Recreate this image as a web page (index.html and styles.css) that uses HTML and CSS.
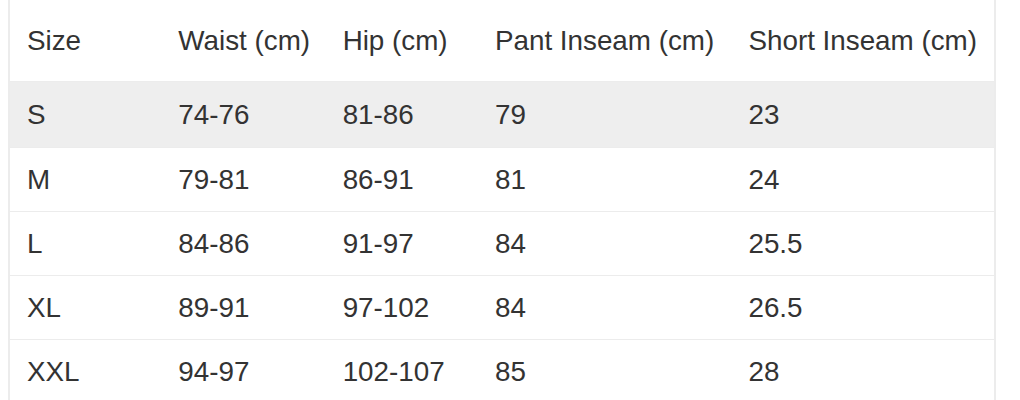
FILE: index.html
```html
<!DOCTYPE html>
<html>
<head>
<meta charset="utf-8">
<link rel="stylesheet" href="styles.css">
</head>
<body>
<div class="wrap">
<table class="sizes">
  <colgroup>
    <col class="c1"><col class="c2"><col class="c3"><col class="c4"><col class="c5">
  </colgroup>
  <thead>
    <tr><th>Size</th><th>Waist (cm)</th><th>Hip (cm)</th><th>Pant Inseam (cm)</th><th>Short Inseam (cm)</th></tr>
  </thead>
  <tbody>
    <tr class="hl"><td>S</td><td>74-76</td><td>81-86</td><td>79</td><td>23</td></tr>
    <tr><td>M</td><td>79-81</td><td>86-91</td><td>81</td><td>24</td></tr>
    <tr><td>L</td><td>84-86</td><td>91-97</td><td>84</td><td>25.5</td></tr>
    <tr><td>XL</td><td>89-91</td><td>97-102</td><td>84</td><td>26.5</td></tr>
    <tr><td>XXL</td><td>94-97</td><td>102-107</td><td>85</td><td>28</td></tr>
  </tbody>
</table>
</div>
</body>
</html>
```

FILE: styles.css
```css
html, body {
  margin: 0;
  padding: 0;
  background: #fff;
}
.wrap {
  padding-left: 8px;
}
.sizes {
  width: 988px;
  table-layout: fixed;
  border-collapse: collapse;
  border-left: 2px solid #ececec;
  border-right: 2px solid #ececec;
  font-family: "Liberation Sans", Arial, sans-serif;
  font-size: 27.8px;
  color: #333;
}
.c1 { width: 152px; }
.c2 { width: 164px; }
.c3 { width: 152px; }
.c4 { width: 253px; }
.c5 { width: 263px; }
.sizes th, .sizes td {
  text-align: left;
  font-weight: normal;
  padding: 0 0 0 17px;
  line-height: 32px;
  white-space: nowrap;
}
.sizes th {
  height: 81px;
  border-bottom: 1px solid #ececec;
}
.sizes td {
  height: 63px;
  border-bottom: 1px solid #ececec;
}
.sizes tr.hl td {
  height: 65px;
  background: #eeeeee;
}
```
